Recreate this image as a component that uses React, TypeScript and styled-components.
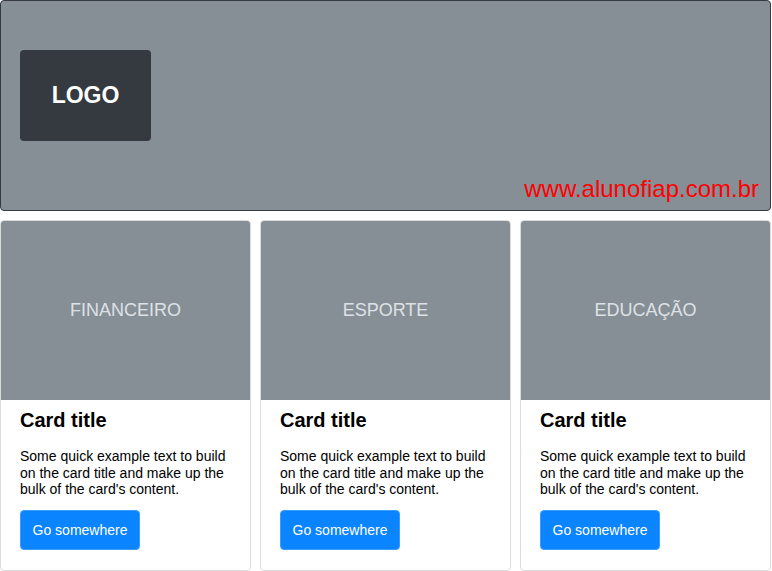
import { FC } from 'react'
import styled, { createGlobalStyle } from 'styled-components'

const GlobalStyle = createGlobalStyle`
	* {
		box-sizing: border-box;
	}
	body {
		margin: 0;
		background: #ffffff;
		font-family: "Liberation Sans", Arial, sans-serif;
	}
`

interface TCard {
	label: string
}

const Card: FC<TCard> = ({label}) => {
	return(
		<CardContainer>
			<CardImage>{label}</CardImage>
			<CardBody>
				<CardTitle>Card title</CardTitle>
				<CardText>Some quick example text to build on the card title and make up the bulk of the card's content.</CardText>
				<Button>Go somewhere</Button>
			</CardBody>
		</CardContainer>
	)
}

const App: FC = () => {
	return(
		<Page>
			<GlobalStyle />
			<Header>
				<Logo>LOGO</Logo>
				<Site>www.alunofiap.com.br</Site>
			</Header>
			<CardRow>
				<Card label="FINANCEIRO" />
				<Card label="ESPORTE" />
				<Card label="EDUCAÇÃO" />
			</CardRow>
		</Page>
	)
}

const Page = styled.div`
	width: 771px;
	display: flex;
	flex-direction: column;
	gap: 9px;
`

const Header = styled.header`
	height: 211px;
	background: #868e96;
	border: 1px solid #343a40;
	border-radius: 4px;
	display: flex;
	flex-direction: column;
	justify-content: space-between;
	padding: 49px 11px 8px 19px;
`

const Logo = styled.div`
	width: 131px;
	height: 91px;
	background: #343a40;
	border-radius: 4px;
	display: flex;
	align-items: center;
	justify-content: center;
	color: #ffffff;
	font-size: 23px;
	font-weight: 700;
`

const Site = styled.div`
	align-self: flex-end;
	color: #ff0000;
	font-size: 24px;
	line-height: 26px;
`

const CardRow = styled.div`
	display: grid;
	grid-template-columns: 251px 251px 251px;
	column-gap: 8px;
	justify-content: space-between;
`

const CardContainer = styled.div`
	height: 351px;
	border: 1px solid #dcdcdc;
	border-radius: 4px;
	overflow: hidden;
	background: #ffffff;
`

const CardImage = styled.div`
	height: 180px;
	margin: -1px -1px 0;
	background: #868e96;
	display: flex;
	align-items: center;
	justify-content: center;
	color: #dee2e6;
	font-size: 18px;
	padding-top: 1px;
`

const CardBody = styled.div`
	padding: 8px 19px 20px;
`

const CardTitle = styled.h5`
	margin: 0 0 16px;
	font-size: 20px;
	font-weight: 700;
	line-height: 24px;
	color: #000000;
`

const CardText = styled.p`
	margin: 0 0 12px;
	font-size: 14px;
	line-height: 16.5px;
	color: #000000;
`

const Button = styled.button`
	width: 120px;
	height: 40px;
	background: #0a84ff;
	border: 1px solid #3a9cff;
	border-radius: 4px;
	color: #ffffff;
	font-family: "Liberation Sans", Arial, sans-serif;
	font-size: 14px;
	padding: 0;
`

export default App
